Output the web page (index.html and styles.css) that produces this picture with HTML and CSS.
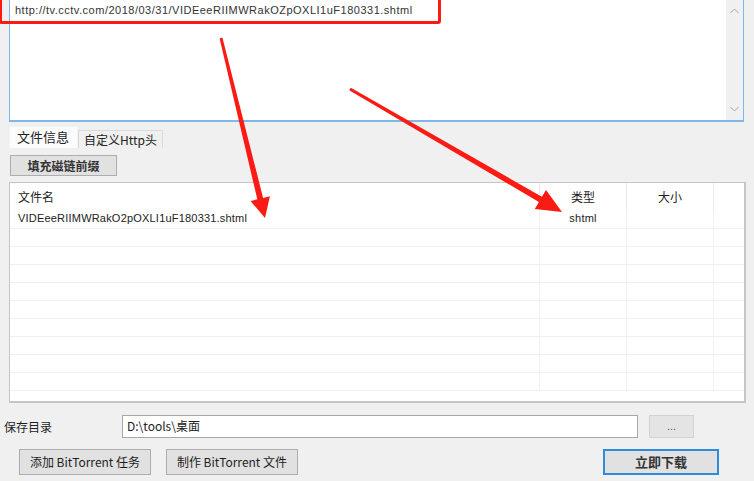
FILE: index.html
```html
<!DOCTYPE html>
<html lang="zh">
<head>
<meta charset="utf-8">
<link rel="stylesheet" href="styles.css">
</head>
<body>
<div class="app">
  <div class="urlbox">
    <div class="urltext">http://tv.cctv.com/2018/03/31/VIDEeeRIIMWRakOZpOXLI1uF180331.shtml</div>
    <div class="vscroll">
      <svg class="chev" width="9" height="6" viewBox="0 0 9 6"><path d="M0.5 5 L4.5 1 L8.5 5" fill="none" stroke="#a6a6a6" stroke-width="1"/></svg>
      <svg class="chev" width="9" height="6" viewBox="0 0 9 6"><path d="M0.5 1 L4.5 5 L8.5 1" fill="none" stroke="#a6a6a6" stroke-width="1"/></svg>
    </div>
  </div>

  <div class="tabs">
    <div class="tab active">文件信息</div>
    <div class="tab">自定义Http头</div>
  </div>

  <div class="btnrow">
    <button class="btn fill">填充磁链前缀</button>
  </div>

  <div class="list">
    <div class="row head">
      <div class="c1">文件名</div>
      <div class="c2">类型</div>
      <div class="c3">大小</div>
      <div class="c4"></div>
    </div>
    <div class="row first">
      <div class="c1">VIDEeeRIIMWRakO2pOXLI1uF180331.shtml</div>
      <div class="c2">shtml</div>
      <div class="c3"></div>
      <div class="c4"></div>
    </div>
    <div class="row"><div class="c1"></div><div class="c2"></div><div class="c3"></div><div class="c4"></div></div>
    <div class="row"><div class="c1"></div><div class="c2"></div><div class="c3"></div><div class="c4"></div></div>
    <div class="row"><div class="c1"></div><div class="c2"></div><div class="c3"></div><div class="c4"></div></div>
    <div class="row"><div class="c1"></div><div class="c2"></div><div class="c3"></div><div class="c4"></div></div>
    <div class="row"><div class="c1"></div><div class="c2"></div><div class="c3"></div><div class="c4"></div></div>
    <div class="row"><div class="c1"></div><div class="c2"></div><div class="c3"></div><div class="c4"></div></div>
    <div class="row"><div class="c1"></div><div class="c2"></div><div class="c3"></div><div class="c4"></div></div>
    <div class="row"><div class="c1"></div><div class="c2"></div><div class="c3"></div><div class="c4"></div></div>
    <div class="row"><div class="c1"></div><div class="c2"></div><div class="c3"></div><div class="c4"></div></div>
  </div>

  <div class="saverow">
    <div class="savelabel">保存目录</div>
    <div class="pathinput">D:\tools\桌面</div>
    <button class="btn dots">...</button>
  </div>

  <div class="actions">
    <button class="btn act">添加 BitTorrent 任务</button>
    <button class="btn act">制作 BitTorrent 文件</button>
    <div class="spacer"></div>
    <button class="btn primary">立即下载</button>
  </div>

  <div class="redbox"></div>
  <svg class="arrows" width="754" height="481" viewBox="0 0 754 481">
    <polygon fill="#fb1a14" points="219.6,38.4 222.4,37.6 263.1,197.9 269.9,196.2 265,218 250.5,201 257.3,199.3"/>
    <polygon fill="#fb1a14" points="349.2,90.3 350.8,87.7 541.9,196.8 546,189.9 562,212 534.8,208.9 538.9,202"/>
  </svg>
</div>
</body>
</html>
```

FILE: styles.css
```css
* { box-sizing: border-box; }
html, body {
  margin: 0;
  padding: 0;
  background: #f0f0f0;
}
body {
  font-family: "Noto Sans CJK SC", "Liberation Sans", sans-serif;
  font-size: 12px;
  color: #1e1e1e;
}
.app {
  position: relative;
  width: 754px;
  height: 481px;
  overflow: hidden;
}
.urlbox {
  margin: -3px 0 0 9px;
  width: 735px;
  height: 125px;
  background: #fff;
  border: 1px solid #7fb7e8;
  border-bottom-width: 2px;
  display: flex;
  justify-content: space-between;
}
.urltext {
  padding: 5px 0 0 5px;
  font-family: "Liberation Sans", sans-serif;
  font-size: 11px;
  color: #333;
  letter-spacing: 0.5px;
  line-height: 14px;
}
.vscroll {
  width: 17px;
  background: #f0f0f0;
  display: flex;
  flex-direction: column;
  justify-content: space-between;
  align-items: center;
  padding: 10px 0 8px;
}
.tabs {
  display: flex;
  align-items: flex-end;
  margin: 4px 0 0 9px;
  height: 22px;
}
.tab {
  height: 18px;
  line-height: 17px;
  padding: 0 5px;
  border: 1px solid #dadada;
  border-bottom: none;
  background: #f0f0f0;
  font-size: 12px;
  color: #222;
}
.tab.active {
  height: 22px;
  line-height: 20px;
  padding: 0 7px;
  background: #fcfcfc;
  border-color: #f4f4f4;
  font-size: 13px;
  width: 69px;
}
.btnrow {
  margin: 7px 0 0 10px;
  display: flex;
}
.btn {
  font-family: "Noto Sans CJK SC", "Liberation Sans", sans-serif;
  font-size: 12px;
  color: #1e1e1e;
  background: #e1e1e1;
  border: 1px solid #adadad;
  padding: 0;
  margin: 0;
}
.btn.fill {
  width: 107px;
  height: 21px;
  line-height: 18px;
  font-weight: bold;
  color: #333;
}
.list {
  margin: 6px 0 0 9px;
  width: 737px;
  height: 221px;
  background: #fff;
  border: 2px solid #c6c6c6;
  border-top-width: 1px;
  border-left-width: 1px;
  overflow: hidden;
}
.row {
  display: grid;
  grid-template-columns: 530px 87px 87px 1fr;
  height: 18px;
  border-bottom: 1px solid #f0f0f0;
}
.row > div {
  border-right: 1px solid #f2f2f2;
  line-height: 17px;
  white-space: nowrap;
}
.row.head {
  height: 27px;
  border-bottom: none;
}
.row.head > div {
  line-height: 28px;
  border-right-color: #ebebeb;
  font-size: 12px;
  color: #222;
}
.row.first {
  height: 19px;
}
.c1 { padding-left: 8px; }
.c2, .c3 { text-align: center; }
.c4 { border-right: none !important; }
.row.first .c1, .row.first .c2 {
  font-family: "Liberation Sans", sans-serif;
  font-size: 11px;
  color: #222;
  letter-spacing: 0.2px;
}
.saverow {
  display: flex;
  align-items: center;
  margin-top: 11px;
  height: 24px;
}
.savelabel {
  width: 122px;
  padding-left: 4px;
  font-size: 12px;
}
.pathinput {
  width: 516px;
  height: 23px;
  background: #fff;
  border: 1px solid #a8a8a8;
  padding-left: 4px;
  line-height: 20px;
  color: #222;
}
.btn.dots {
  margin-left: 11px;
  width: 45px;
  height: 23px;
  background: #e4e4e4;
  border-color: #d2d2d2;
  color: #555;
  font-family: "Liberation Sans", sans-serif;
  font-size: 11px;
  line-height: 18px;
}
.actions {
  display: flex;
  align-items: center;
  margin: 10px 0 0 19px;
  height: 27px;
}
.btn.act {
  width: 132px;
  height: 26px;
  margin-right: 15px;
  line-height: 22px;
}
.spacer { flex: 1; }
.btn.primary {
  width: 116px;
  height: 26px;
  margin-right: 35px;
  border: 2px solid #2f8bdc;
  font-weight: bold;
  font-size: 13px;
  color: #333;
}
.redbox {
  position: absolute;
  left: -1px;
  top: -5px;
  width: 442px;
  height: 29px;
  border: 3px solid #fb1a14;
  border-radius: 3px;
  pointer-events: none;
}
.arrows {
  position: absolute;
  left: 0;
  top: 0;
  pointer-events: none;
}
```
